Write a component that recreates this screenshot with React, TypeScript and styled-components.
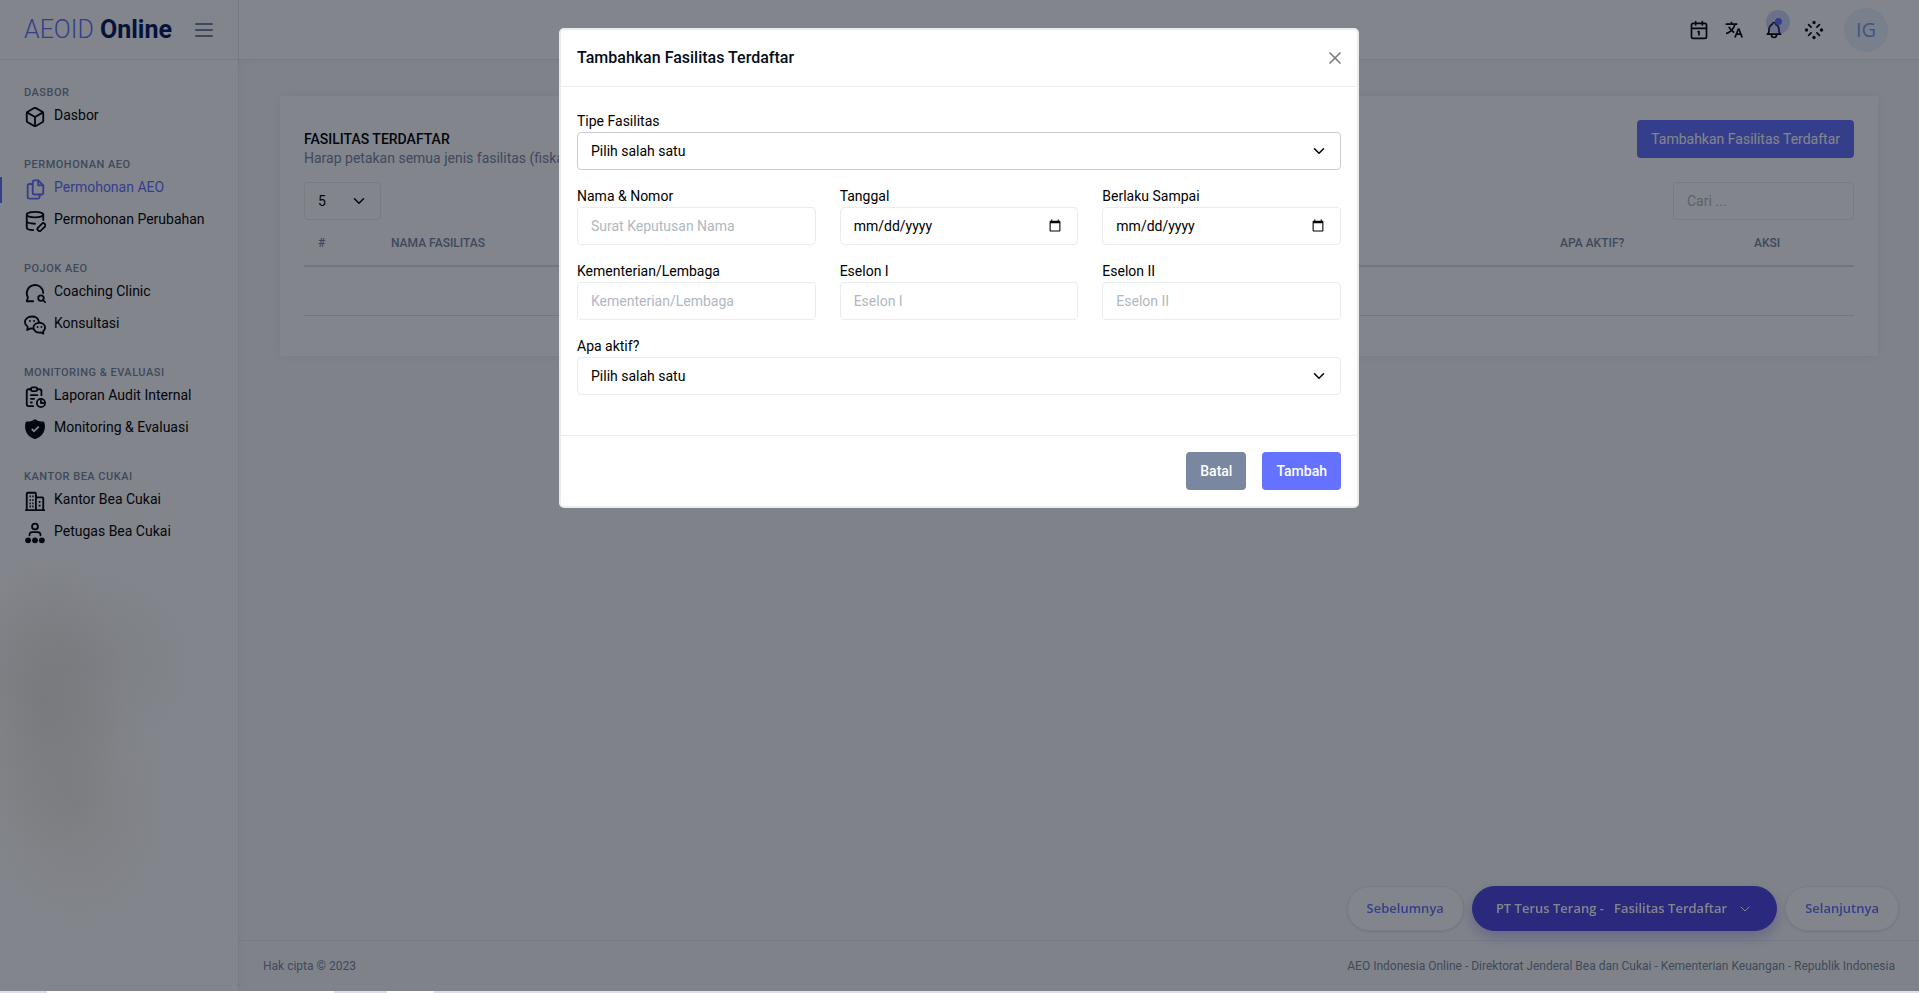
import React from "react";
import styled, { createGlobalStyle, css } from "styled-components";
import { Box, Calendar1, ChevronDown, X } from "lucide-react";
import { TbBell } from "react-icons/tb";
import { RiTranslate2 } from "react-icons/ri";

const color = {
  primary: "#6571ff",
  indigo: "#4f46e5",
  navy: "#031a61",
  muted: "#7987a1",
  border: "#e9ecef",
  body: "#f9fafb",
  text: "#000000",
};

const GlobalStyle = createGlobalStyle`
  *, *::before, *::after { box-sizing: border-box; }
  body {
    margin: 0;
    background: ${color.body};
    color: ${color.text};
    font-family: Roboto, "Liberation Sans", sans-serif;
    font-size: 14px;
    line-height: 21px;
  }
  button, input, select { font: inherit; color: inherit; }
  h1, h2, p { margin: 0; }
`;

const Page = styled.div`
  display: flex;
  flex-direction: column;
  min-height: 100vh;
`;

const Shell = styled.div`
  display: flex;
  flex: 1;
`;

const TaskStrip = styled.div`
  display: grid;
  grid-template-columns: 47px 287px 53px 47px 1fr;
  height: 2px;
  background: #dcdfe8;
`;

const StripTab = styled.span<{ $column: number }>`
  grid-column: ${(p) => p.$column};
  background: #ffffff;
`;

const Sidebar = styled.aside`
  display: flex;
  flex-direction: column;
  flex: none;
  width: 239px;
  background: #ffffff;
  border-right: 1px solid ${color.border};
  box-shadow: 0 0 10px rgba(183, 192, 206, 0.2);
`;

const Brand = styled.div`
  display: flex;
  align-items: center;
  justify-content: space-between;
  height: 60px;
  padding: 0 25px 0 24px;
  border-bottom: 1px solid ${color.border};
`;

const Logo = styled.a`
  color: ${color.primary};
  font-size: 25px;
  font-weight: 300;
  line-height: 30px;
  text-decoration: none;
  strong {
    color: ${color.navy};
    font-weight: 700;
  }
`;

const IconButton = styled.button`
  position: relative;
  display: flex;
  align-items: center;
  justify-content: center;
  padding: 0;
  border: 0;
  background: none;
  cursor: pointer;
  svg {
    flex: none;
  }
`;

const Nav = styled.nav`
  display: flex;
  flex-direction: column;
  gap: 26px;
  padding: 25px 0 16px;
`;

const NavTitle = styled.h2`
  padding: 1px 24px 0;
  color: ${color.muted};
  font-size: 11px;
  font-weight: 500;
  line-height: 13px;
  letter-spacing: 0.5px;
  text-transform: uppercase;
`;

const NavLink = styled.a<{ $active?: boolean }>`
  position: relative;
  display: flex;
  align-items: center;
  gap: 8px;
  height: 32px;
  padding: 0 24px;
  color: ${(p) => (p.$active ? color.primary : color.text)};
  text-decoration: none;
  white-space: nowrap;
  svg {
    flex: none;
    margin-top: 4px;
  }
  ${(p) =>
    p.$active &&
    css`
      &::before {
        content: "";
        position: absolute;
        left: 0;
        top: 6px;
        width: 2px;
        height: 26px;
        background: ${color.primary};
      }
    `}
`;

const SidebarArt = styled.div`
  flex: 1;
  background:
    radial-gradient(ellipse 80px 150px at 44px 140px, rgba(218, 206, 190, 0.35), transparent),
    radial-gradient(ellipse 90px 120px at 76px 240px, rgba(222, 212, 196, 0.3), transparent),
    radial-gradient(ellipse 120px 100px at 80px 100px, rgba(222, 218, 220, 0.35), transparent);
`;

const Main = styled.div`
  display: flex;
  flex: 1;
  flex-direction: column;
  min-width: 0;
`;

const Topbar = styled.header`
  display: flex;
  align-items: center;
  justify-content: flex-end;
  gap: 20px;
  height: 60px;
  padding: 0 31px;
  background: #ffffff;
  border-bottom: 1px solid ${color.border};
  box-shadow: 3px 0 10px rgba(183, 192, 206, 0.2);
`;

const ToolPair = styled.div`
  display: flex;
  gap: 15px;
`;

const Ping = styled.span`
  position: absolute;
  top: -10px;
  left: 2px;
  display: flex;
  align-items: center;
  justify-content: center;
  width: 24px;
  height: 24px;
  border-radius: 50%;
  background: rgba(101, 113, 255, 0.3);
  &::before {
    content: "";
    width: 7px;
    height: 7px;
    border-radius: 50%;
    background: ${color.primary};
  }
`;

const Avatar = styled.button`
  width: 44px;
  height: 44px;
  padding: 0;
  border: 0;
  border-radius: 50%;
  background: #ebf4ff;
  color: #7f9cf5;
  font-family: "Open Sans", sans-serif;
  font-size: 20px;
`;

const Content = styled.main`
  flex: 1;
  padding: 36px 41px;
`;

const Card = styled.section`
  padding: 24px 24px 40px;
  background: #ffffff;
  box-shadow: 0 0 10px rgba(183, 192, 206, 0.3);
`;

const CardHead = styled.div`
  display: flex;
  align-items: flex-start;
  justify-content: space-between;
`;

const CardTitle = styled.h1`
  padding-top: 9px;
  font-size: 14px;
  font-weight: 500;
  line-height: 20px;
  text-transform: uppercase;
`;

const CardNote = styled.p`
  color: ${color.muted};
  line-height: 19px;
`;

const Button = styled.button<{ $tone?: "muted"; $medium?: boolean }>`
  height: 38px;
  padding: 0 14px;
  border: 0;
  border-radius: 4px;
  background: ${(p) => (p.$tone === "muted" ? color.muted : color.primary)};
  color: #ffffff;
  font-weight: ${(p) => (p.$medium ? 500 : 400)};
  cursor: pointer;
`;

const CardTools = styled.div`
  display: flex;
  justify-content: space-between;
  padding-top: 14px;
`;

const fieldBox = css`
  width: 100%;
  height: 38px;
  padding: 0 13px;
  border: 1px solid ${color.border};
  border-radius: 4px;
  background: #ffffff;
  outline: none;
`;

const Input = styled.input`
  ${fieldBox}
  &::placeholder {
    color: #b0b8c1;
    opacity: 1;
  }
  &::-webkit-datetime-edit-month-field,
  &::-webkit-datetime-edit-day-field,
  &::-webkit-datetime-edit-year-field {
    padding: 0;
  }
`;

const SearchInput = styled(Input)`
  width: 181px;
`;

const Select = styled.select<{ $focused?: boolean }>`
  ${fieldBox}
  appearance: none;
  border-color: ${(p) => (p.$focused ? "#c9ccd1" : color.border)};
`;

const SelectBox = styled.div<{ $width?: string }>`
  position: relative;
  width: ${(p) => p.$width ?? "100%"};
  svg {
    position: absolute;
    top: 10px;
    right: 13px;
    pointer-events: none;
  }
`;

const Table = styled.table`
  width: 100%;
  table-layout: fixed;
  border-collapse: collapse;
  th {
    height: 46px;
    padding: 2px 14px 0;
    border-bottom: 2px solid #dee2e6;
    color: ${color.muted};
    font-size: 12px;
    font-weight: 500;
    text-align: left;
    text-transform: uppercase;
  }
  td {
    height: 49px;
    border-bottom: 1px solid #dee2e6;
  }
`;

const Footer = styled.footer`
  display: flex;
  align-items: center;
  justify-content: space-between;
  height: 51px;
  padding: 0 24px;
  border-top: 1px solid ${color.border};
  color: ${color.muted};
  font-size: 12px;
`;

const Pager = styled.div`
  position: fixed;
  right: 20px;
  bottom: 62px;
  display: flex;
  gap: 8px;
`;

const Pill = styled.button<{ $current?: boolean }>`
  display: flex;
  align-items: center;
  gap: 10px;
  height: 45px;
  padding: 0 ${(p) => (p.$current ? 23 : 19)}px;
  border: 1px solid ${(p) => (p.$current ? color.indigo : color.border)};
  border-radius: 23px;
  background: ${(p) => (p.$current ? color.indigo : "#ffffff")};
  box-shadow: ${(p) =>
    p.$current ? "0 6px 14px rgba(79, 70, 229, 0.3)" : "0 1px 3px rgba(100, 110, 130, 0.2)"};
  color: ${(p) => (p.$current ? "#ffffff" : color.primary)};
  font-family: "Open Sans", "Noto Sans", sans-serif;
  font-size: 13px;
  font-weight: 600;
  white-space: nowrap;
`;

const Backdrop = styled.div`
  position: fixed;
  inset: 0 0 2px;
  display: flex;
  align-items: flex-start;
  justify-content: center;
  padding: 28px 29px 28px 28px;
  background: rgba(6, 12, 23, 0.5);
`;

const Dialog = styled.form`
  width: 100%;
  max-width: 800px;
  border: 2px solid ${color.border};
  border-radius: 5px;
  background: #ffffff;
`;

const DialogHead = styled.div`
  display: flex;
  align-items: center;
  justify-content: space-between;
  padding: 16px;
  border-bottom: 1px solid ${color.border};
  color: #060c17;
`;

const DialogTitle = styled.h2`
  font-size: 16px;
  font-weight: 500;
  line-height: 24px;
`;

const CloseButton = styled(IconButton)`
  width: 12px;
  height: 12px;
  color: #77797e;
`;

const Fields = styled.div`
  display: grid;
  grid-template-columns: repeat(3, 1fr);
  gap: 16px 24px;
  padding: 24px 16px 40px;
`;

const FieldBox = styled.div<{ $wide?: boolean }>`
  grid-column: ${(p) => (p.$wide ? "1 / -1" : "auto")};
  min-width: 0;
`;

const Label = styled.label`
  display: block;
`;

const DialogFoot = styled.div`
  display: flex;
  justify-content: flex-end;
  gap: 16px;
  padding: 16px;
  border-top: 1px solid ${color.border};
`;

const strokeProps = {
  viewBox: "0 0 24 24",
  fill: "none",
  stroke: "currentColor",
  strokeWidth: 2,
  strokeLinecap: "round" as const,
  strokeLinejoin: "round" as const,
};

const MenuIcon = () => (
  <svg width="18" height="14" viewBox="0 0 18 14" stroke={color.muted} strokeWidth="2" strokeLinecap="round">
    <path d="M1 1h16M1 7h16M1 13h16" />
  </svg>
);

const FilesIcon = () => (
  <svg width="22" height="22" {...strokeProps}>
    <path d="M11.500 2.500h4L21 8v8a2 2 0 0 1-2 2h-7.500a2 2 0 0 1-2-2V4.500a2 2 0 0 1 2-2z" />
    <path d="M15.500 2.500V8H21" />
    <path d="M9 6.500H6a2 2 0 0 0-2 2v12a2 2 0 0 0 2 2h9a2 2 0 0 0 2-2V18" />
  </svg>
);

const DatabaseEditIcon = () => (
  <svg width="22" height="22" {...strokeProps}>
    <ellipse cx="12" cy="5" rx="9" ry="3" />
    <path d="M3 5v14c0 1.500 2.800 2.700 7 3M21 5v6M3 12c0 1.500 3.500 2.800 9 3" />
    <rect x="14" y="16.500" width="10" height="4.500" rx="1.800" transform="rotate(-45 19 18.750)" />
  </svg>
);

const ChatSearchIcon = () => (
  <svg width="22" height="22" {...strokeProps}>
    <path d="M10 21H3l1.300-4A9 9 0 1 1 21 12" />
    <circle cx="18.500" cy="17.500" r="3" />
    <path d="M21 20l2 2" />
  </svg>
);

const ChatsIcon = () => (
  <svg width="22" height="22" {...strokeProps}>
    <path d="M9.500 16l-2.200-.3L3.500 17.500l.5-3.500A6.800 6.800 0 0 1 1 9c0-3.600 3.400-6.300 7.700-6.300 3.800 0 6.800 2.200 7.400 5.300" />
    <path d="M16.800 9.500c3.500 0 6.200 2.300 6.200 5.300 0 1.800-.8 3.200-2.200 4.200l.3 2.500-2.800-1.300c-4.500.8-8-1.700-8-5.400 0-3 2.900-5.300 6.500-5.300z" />
    <path d="M6.500 7.500v.2M11 7.500v.2M14.800 14v.2M19 14v.2" />
  </svg>
);

const ReportClockIcon = () => (
  <svg width="22" height="22" {...strokeProps}>
    <path d="M10 22H5a2 2 0 0 1-2-2V5.500a2 2 0 0 1 2-2h2.500M14.500 3.500H17a2 2 0 0 1 2 2V10" />
    <rect x="7.500" y="1.500" width="7" height="4" rx="2" />
    <path d="M7.500 10h7M7.500 14h3.500M7.500 18h1" />
    <circle cx="18.500" cy="18.500" r="4.500" />
    <path d="M18.500 16v2.500H21" />
  </svg>
);

const ShieldIcon = () => (
  <svg width="22" height="22" viewBox="0 0 24 24">
    <path
      fill="currentColor"
      d="M12 1c2.500 2 5.500 3 8.800 2.900.7 0 1.200.4 1.400 1 2.300 8-1.700 15.600-9.600 18-.4.1-.8.1-1.200 0C3.500 20.500-.5 12.900 1.800 4.900c.2-.6.700-1 1.400-1C6.500 4 9.500 3 12 1z"
    />
    <path d="M8.500 12l2.500 2.500 5-5" fill="none" stroke="#ffffff" strokeWidth="2" />
  </svg>
);

const BuildingIcon = () => (
  <svg width="22" height="22" {...strokeProps}>
    <path d="M2 22h20M3 22V4a1 1 0 0 1 1-1h8a1 1 0 0 1 1 1v18M13 8h7a1 1 0 0 1 1 1v13" />
    <path strokeLinecap="butt" d="M6 7h1.500M9 7h1.500M6 11h1.500M9 11h1.500M6 14.500h1.500M9 14.500h1.500M6 18h1.500M9 18h1.500M16 13h2M16 17h2" />
  </svg>
);

const OfficerIcon = () => (
  <svg width="22" height="22" {...strokeProps}>
    <circle cx="12" cy="5" r="3.200" />
    <path d="M6 14.500V14a3 3 0 0 1 3-3h6a3 3 0 0 1 3 3v.5" />
    <g fill="currentColor" stroke="none">
      <circle cx="4.500" cy="20" r="3.200" />
      <circle cx="12" cy="20" r="3.200" />
      <circle cx="19.500" cy="20" r="3.200" />
    </g>
  </svg>
);

const SparkIcon = () => (
  <svg width="20" height="20" {...strokeProps}>
    <path d="M5.500 5.500l3 3M18.500 5.500l-3 3M5.500 18.500l3-3M18.500 18.500l-3-3" />
    <g fill="currentColor" stroke="none">
      <circle cx="12" cy="3" r="2" />
      <circle cx="12" cy="21" r="2" />
      <circle cx="3" cy="12" r="2" />
      <circle cx="21" cy="12" r="2" />
    </g>
  </svg>
);

type NavItem = { label: string; icon: React.ReactNode; active?: boolean };

const sections: { title: string; items: NavItem[] }[] = [
  { title: "Dasbor", items: [{ label: "Dasbor", icon: <Box size={22} /> }] },
  {
    title: "Permohonan AEO",
    items: [
      { label: "Permohonan AEO", icon: <FilesIcon />, active: true },
      { label: "Permohonan Perubahan", icon: <DatabaseEditIcon /> },
    ],
  },
  {
    title: "Pojok AEO",
    items: [
      { label: "Coaching Clinic", icon: <ChatSearchIcon /> },
      { label: "Konsultasi", icon: <ChatsIcon /> },
    ],
  },
  {
    title: "Monitoring & Evaluasi",
    items: [
      { label: "Laporan Audit Internal", icon: <ReportClockIcon /> },
      { label: "Monitoring & Evaluasi", icon: <ShieldIcon /> },
    ],
  },
  {
    title: "Kantor Bea Cukai",
    items: [
      { label: "Kantor Bea Cukai", icon: <BuildingIcon /> },
      { label: "Petugas Bea Cukai", icon: <OfficerIcon /> },
    ],
  },
];

type FieldProps = { id: string; label: string; type?: string; placeholder?: string };

const TextField = ({ id, label, type = "text", placeholder }: FieldProps) => (
  <FieldBox>
    <Label htmlFor={id}>{label}</Label>
    <Input id={id} type={type} placeholder={placeholder} />
  </FieldBox>
);

const SelectField = ({ id, label, focused }: { id: string; label: string; focused?: boolean }) => (
  <FieldBox $wide>
    <Label htmlFor={id}>{label}</Label>
    <SelectBox>
      <Select id={id} $focused={focused}>
        <option>Pilih salah satu</option>
      </Select>
      <ChevronDown size={18} />
    </SelectBox>
  </FieldBox>
);

export default function App() {
  return (
    <Page>
      <GlobalStyle />
      <Shell>
        <Sidebar>
          <Brand>
            <Logo href="#">
              AEOID <strong>Online</strong>
            </Logo>
            <IconButton type="button" aria-label="Menu">
              <MenuIcon />
            </IconButton>
          </Brand>
          <Nav>
            {sections.map((section) => (
              <div key={section.title}>
                <NavTitle>{section.title}</NavTitle>
                {section.items.map((item) => (
                  <NavLink key={item.label} href="#" $active={item.active}>
                    {item.icon}
                    {item.label}
                  </NavLink>
                ))}
              </div>
            ))}
          </Nav>
          <SidebarArt />
        </Sidebar>

        <Main>
          <Topbar>
            <ToolPair>
              <IconButton type="button" aria-label="Kalender">
                <Calendar1 size={20} />
              </IconButton>
              <IconButton type="button" aria-label="Bahasa">
                <RiTranslate2 size={20} />
              </IconButton>
            </ToolPair>
            <IconButton type="button" aria-label="Notifikasi">
              <TbBell size={20} />
              <Ping />
            </IconButton>
            <IconButton type="button" aria-label="Tema">
              <SparkIcon />
            </IconButton>
            <Avatar type="button">IG</Avatar>
          </Topbar>

          <Content>
            <Card>
              <CardHead>
                <div>
                  <CardTitle>Fasilitas Terdaftar</CardTitle>
                  <CardNote>Harap petakan semua jenis fasilitas (fiskal)</CardNote>
                </div>
                <Button type="button">Tambahkan Fasilitas Terdaftar</Button>
              </CardHead>
              <CardTools>
                <SelectBox $width="77px">
                  <Select aria-label="Jumlah baris">
                    <option>5</option>
                  </Select>
                  <ChevronDown size={18} />
                </SelectBox>
                <SearchInput type="text" aria-label="Cari" placeholder="Cari ..." />
              </CardTools>
              <Table>
                <colgroup>
                  <col width="73" />
                  <col />
                  <col width="194" />
                  <col width="114" />
                </colgroup>
                <thead>
                  <tr>
                    <th>#</th>
                    <th>Nama Fasilitas</th>
                    <th>Apa Aktif?</th>
                    <th>Aksi</th>
                  </tr>
                </thead>
                <tbody>
                  <tr>
                    <td colSpan={4} />
                  </tr>
                </tbody>
              </Table>
            </Card>
          </Content>

          <Footer>
            <span>Hak cipta © 2023</span>
            <span>AEO Indonesia Online - Direktorat Jenderal Bea dan Cukai - Kementerian Keuangan - Republik Indonesia</span>
          </Footer>
        </Main>
      </Shell>
      <TaskStrip>
        <StripTab $column={2} />
        <StripTab $column={4} />
      </TaskStrip>

      <Pager>
        <Pill type="button">Sebelumnya</Pill>
        <Pill type="button" $current>
          <span>PT Terus Terang -</span>
          <span>Fasilitas Terdaftar</span>
          <ChevronDown size={16} strokeWidth={1.5} />
        </Pill>
        <Pill type="button">Selanjutnya</Pill>
      </Pager>

      <Backdrop>
        <Dialog role="dialog" aria-labelledby="dialog-title">
          <DialogHead>
            <DialogTitle id="dialog-title">Tambahkan Fasilitas Terdaftar</DialogTitle>
            <CloseButton type="button" aria-label="Tutup">
              <X size={20} strokeWidth={2} />
            </CloseButton>
          </DialogHead>
          <Fields>
            <SelectField id="tipe" label="Tipe Fasilitas" focused />
            <TextField id="nama" label="Nama & Nomor" placeholder="Surat Keputusan Nama" />
            <TextField id="tanggal" label="Tanggal" type="date" />
            <TextField id="berlaku" label="Berlaku Sampai" type="date" />
            <TextField id="kementerian" label="Kementerian/Lembaga" placeholder="Kementerian/Lembaga" />
            <TextField id="eselon1" label="Eselon I" placeholder="Eselon I" />
            <TextField id="eselon2" label="Eselon II" placeholder="Eselon II" />
            <SelectField id="aktif" label="Apa aktif?" />
          </Fields>
          <DialogFoot>
            <Button type="button" $tone="muted" $medium>
              Batal
            </Button>
            <Button type="submit" $medium>
              Tambah
            </Button>
          </DialogFoot>
        </Dialog>
      </Backdrop>
    </Page>
  );
}
